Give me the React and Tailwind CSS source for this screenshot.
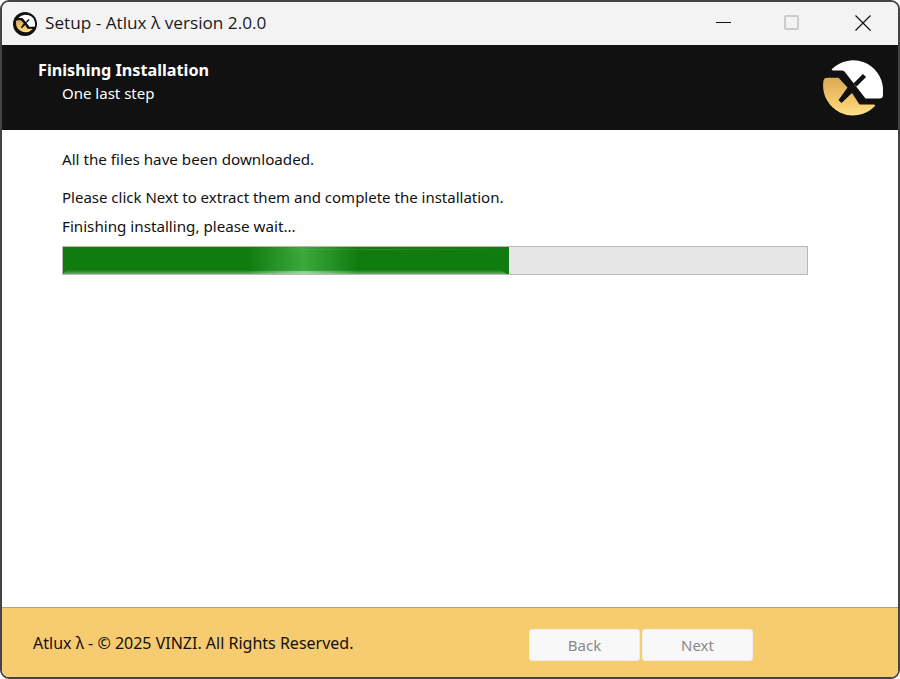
import React from "react";

const FONT_BODY = "font-['Noto_Sans','Liberation_Sans',sans-serif]";

// logo: white top half, gold lower half, the X is the gap between them
const Logo = ({ className, gradId }) => (
  <svg viewBox="0 0 60 60" className={className}>
    <defs>
      <linearGradient id={gradId} x1="0" y1="0" x2="0" y2="1">
        <stop offset="0" stopColor="#dcab55" />
        <stop offset="0.7" stopColor="#f7cb70" />
        <stop offset="1" stopColor="#ffe38a" />
      </linearGradient>
    </defs>
    <path
      d="M9.5 10.5 A30 30 0 0 1 60 30 L60 37 Q60 40.5 56.5 40.5 L42.5 40.5 L21.5 13.5 Q20.5 12.5 18.5 12.5 L10.5 12.5 Q7.5 12.5 9.5 10.5 Z"
      fill="#ffffff"
    />
    <path d="M32 27 L41.5 17.5" stroke="#111111" strokeWidth="4.5" fill="none" />
    <path
      d="M0.3 24 Q0.3 19.7 4.5 19.7 L15.5 19.7 L24.5 29.5 L15.5 42 L18.5 45 L29 35 L36.5 46.5 L50.5 46.5 Q53.5 46.5 51 49 A30 30 0 0 1 0.3 24 Z"
      fill={`url(#${gradId})`}
    />
  </svg>
);

const App = () => {
  return (
    <div className="w-[900px] h-[679px] bg-white overflow-hidden">
      <div className={`w-full h-full flex flex-col border-2 border-[#444444] rounded-[9px] overflow-hidden ${FONT_BODY}`}>
        {/* title bar */}
        <div className="h-[43px] shrink-0 bg-[#f3f3f3] flex items-center pl-[11px]">
          <div className="w-[24px] h-[24px] rounded-full bg-[#111111] flex items-center justify-center">
            <Logo className="w-[19px] h-[19px]" gradId="logoSmall" />
          </div>
          <span className="ml-[8px] -mt-[2px] text-[17.2px] text-[#1a1a1a] font-['Open_Sans',sans-serif]">
            Setup - Atlux λ version 2.0.0
          </span>
          <div className="ml-auto flex items-center -mt-[2px]">
            <div className="w-[66px] h-[43px] flex items-center justify-center">
              <div className="w-[15px] h-[1px] bg-[#111111]" />
            </div>
            <div className="w-[71px] h-[43px] flex items-center justify-center">
              <div className="w-[15px] h-[15px] rounded-[2px] border-2 border-[#cccccc]" />
            </div>
            <div className="w-[71px] h-[43px] flex items-center justify-center">
              <svg viewBox="0 0 16 16" className="w-[16px] h-[16px]" fill="none" stroke="#111111" strokeWidth="1.2">
                <path d="M0.5 0.5 L15.5 15.5 M15.5 0.5 L0.5 15.5" />
              </svg>
            </div>
          </div>
        </div>

        {/* header */}
        <div className="h-[85px] shrink-0 bg-[#111111] flex items-center justify-between pl-[36px] pr-[15px] text-white">
          <div className="pb-[14px]">
            <div className="text-[16.2px] leading-[24px] font-bold">Finishing Installation</div>
            <div className="text-[15px] leading-[22px] pl-[24px]">One last step</div>
          </div>
          <Logo className="w-[60px] h-[60px]" gradId="logoBig" />
        </div>

        {/* content */}
        <div className="flex-1 bg-white pl-[60px] pr-[90px] pt-[19px] text-[15px] text-[#111111]">
          <div className="leading-[20px] text-[15.2px]">All the files have been downloaded.</div>
          <div className="leading-[20px] mt-[18px]">Please click Next to extract them and complete the installation.</div>
          <div className="leading-[20px] mt-[9px] text-[15.2px]">Finishing installing, please wait...</div>
          <div className="mt-[10px] h-[29px] border border-[#b8b8b8] bg-[#e6e6e6]">
            <div className="relative w-[446px] h-full bg-[#107c10] overflow-hidden">
              <div className="absolute inset-y-0 left-[185px] w-[110px] bg-gradient-to-r from-[#107c1000] via-[#3aa93a] to-[#107c1000]" />
              <div className="absolute top-[2px] left-[190px] w-[256px] h-[1px] bg-gradient-to-r from-[#ffffff00] via-[#ffffff20] to-[#ffffff00]" />
              <div className="absolute left-0 right-0 bottom-0 h-[4px] bg-gradient-to-t from-[#ffffff60] to-[#ffffff00] [clip-path:polygon(4px_0,calc(100%_-_9px)_0,calc(100%_-_2px)_100%,0_100%)]" />
              <div className="absolute left-[185px] w-[110px] bottom-0 h-[3px] bg-gradient-to-r from-[#ffffff00] via-[#ffffff50] to-[#ffffff00]" />
            </div>
          </div>
        </div>

        {/* footer */}
        <div className="h-[70px] shrink-0 border-t border-[#a8a08c] bg-[#f7cb70] flex items-center pl-[31px]">
          <span className="text-[16px] text-[#111111]">Atlux λ - © 2025 VINZI. All Rights Reserved.</span>
          <div className="ml-auto mr-[145px] mt-[5px] flex gap-[2px]">
            <button className="w-[111px] h-[32px] rounded-[3px] bg-[#f8f8f8] border border-[#eeeeee] text-[15px] text-[#8a8a8a]">Back</button>
            <button className="w-[111px] h-[32px] rounded-[3px] bg-[#f8f8f8] border border-[#eeeeee] text-[15px] text-[#8a8a8a]">Next</button>
          </div>
        </div>
      </div>
    </div>
  );
};

export default App;
